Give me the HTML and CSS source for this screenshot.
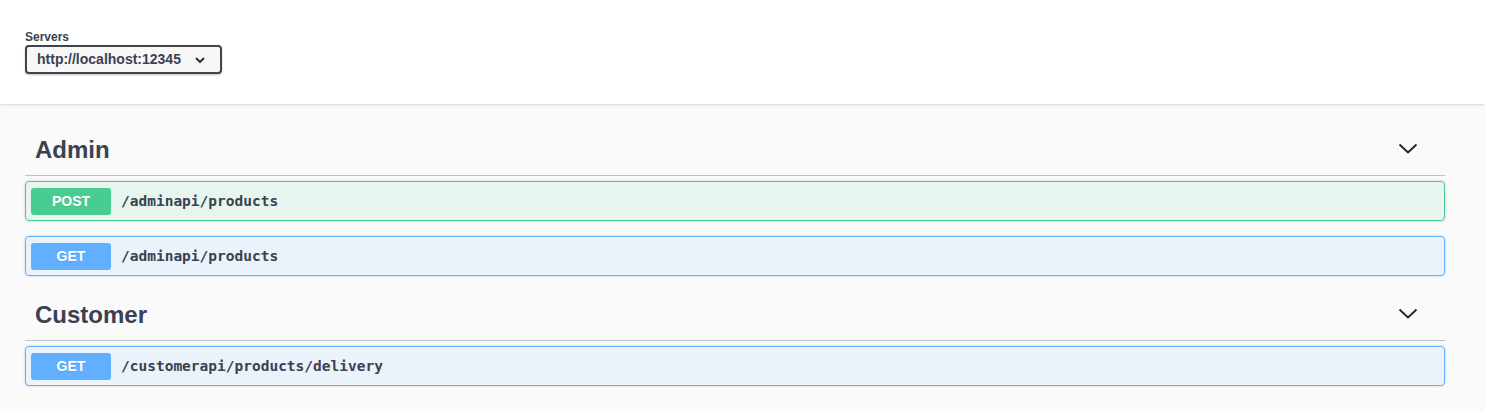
FILE: index.html
```html
<!DOCTYPE html>
<html>
<head>
<meta charset="utf-8">
<link rel="stylesheet" href="styles.css">
</head>
<body>
<div class="scheme-container">
  <div class="wrapper">
    <div class="servers">
      <span class="servers-title">Servers</span>
      <div class="select">
        <span class="select-value">http://localhost:12345</span>
        <svg class="select-arrow" width="12" height="8" viewBox="0 0 12 8"><path d="M2 2 L6 6 L10 2" fill="none" stroke="#222" stroke-width="1.8"/></svg>
      </div>
    </div>
  </div>
</div>
<div class="wrapper main">
  <section class="tag-section">
    <h3 class="opblock-tag"><span>Admin</span>
      <svg class="tag-arrow" width="20" height="20" viewBox="0 0 20 20"><path d="M1.5 5.5 L10 13.5 L18.5 5.5" fill="none" stroke="#222" stroke-width="1.8"/></svg>
    </h3>
    <div class="opblock post"><span class="method">POST</span><span class="path">/adminapi/products</span></div>
    <div class="opblock get"><span class="method">GET</span><span class="path">/adminapi/products</span></div>
  </section>
  <section class="tag-section">
    <h3 class="opblock-tag"><span>Customer</span>
      <svg class="tag-arrow" width="20" height="20" viewBox="0 0 20 20"><path d="M1.5 5.5 L10 13.5 L18.5 5.5" fill="none" stroke="#222" stroke-width="1.8"/></svg>
    </h3>
    <div class="opblock get"><span class="method">GET</span><span class="path">/customerapi/products/delivery</span></div>
  </section>
</div>
</body>
</html>
```
FILE: styles.css
```css
html, body {
  margin: 0;
  padding: 0;
  background: #fafafa;
  font-family: "Liberation Sans", Arial, sans-serif;
  color: #3b4151;
}
.wrapper {
  width: 1420px;
  margin-left: 25px;
}
.scheme-container {
  background: #fff;
  padding: 30px 0 30px;
  box-shadow: 0 1px 2px 0 rgba(0,0,0,.15);
  margin-bottom: 22px;
}
.servers {
  display: flex;
  flex-direction: column;
  align-items: flex-start;
}
.servers-title {
  font-size: 12px;
  font-weight: bold;
  line-height: 15px;
}
.select {
  box-sizing: border-box;
  width: 197px;
  height: 29px;
  border: 2px solid #41444e;
  border-radius: 4px;
  background: #f7f7f7;
  box-shadow: 0 1px 2px 0 rgba(0,0,0,.25);
  display: flex;
  align-items: center;
  padding: 0 0 0 10px;
}
.select-value {
  font-size: 14px;
  font-weight: bold;
  color: #3b4151;
  margin-top: -1px;
}
.select-arrow {
  margin-left: 13px;
}
.opblock-tag {
  margin: 0 0 5px;
  box-sizing: border-box;
  height: 50px;
  padding: 0 27px 0 10px;
  border-bottom: 1px solid rgba(59,65,81,.3);
  display: flex;
  align-items: center;
  justify-content: space-between;
  font-size: 24px;
  font-weight: bold;
  color: #3b4151;
}
.opblock-tag span {
  margin-top: -1px;
}
.tag-arrow {
  margin-top: -4px;
}
.opblock {
  box-sizing: border-box;
  height: 40px;
  margin-bottom: 15px;
  border: 1px solid;
  border-radius: 4px;
  box-shadow: 0 0 3px rgba(0,0,0,.19);
  display: flex;
  align-items: center;
  padding: 0 5px;
}
.opblock.post {
  background: rgba(73,204,144,.1);
  border-color: #49cc90;
}
.opblock.get {
  background: rgba(97,175,254,.1);
  border-color: #61affe;
}
.method {
  width: 80px;
  height: 27px;
  border-radius: 3px;
  color: #fff;
  font-size: 14px;
  font-weight: bold;
  display: flex;
  align-items: center;
  justify-content: center;
  text-shadow: 0 1px 0 rgba(0,0,0,.1);
}
.post .method { background: #49cc90; }
.get .method { background: #61affe; }
.path {
  margin-left: 10px;
  font-family: "DejaVu Sans Mono", "Liberation Mono", monospace;
  font-size: 14.5px;
  font-weight: bold;
  color: #3b4151;
}
```
